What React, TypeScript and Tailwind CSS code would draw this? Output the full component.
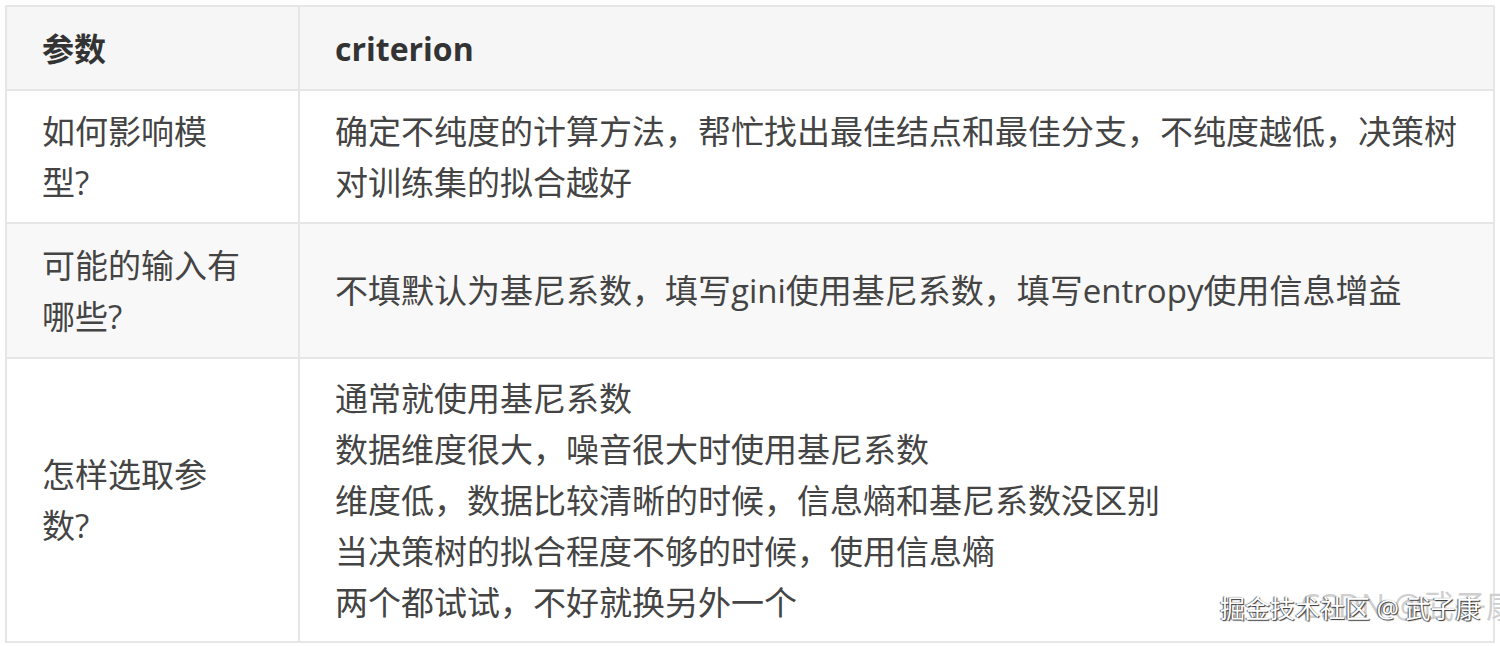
export default function App() {
  const font = "font-['Open_Sans','Noto_Sans_CJK_SC',sans-serif]";
  const tips = [
    "通常就使用基尼系数",
    "数据维度很大，噪音很大时使用基尼系数",
    "维度低，数据比较清晰的时候，信息熵和基尼系数没区别",
    "当决策树的拟合程度不够的时候，使用信息熵",
    "两个都试试，不好就换另外一个",
  ];

  return (
    <div className={`relative w-[1500px] h-[646px] bg-white overflow-hidden ${font} text-[#444]`}>
      <div className="pt-[5px] pl-[5px]">
        <table className="w-[1490px] border-collapse table-fixed text-[33px] leading-[51px]">
          <colgroup>
            <col className="w-[293px]" />
            <col />
          </colgroup>
          <thead>
            <tr className="h-[84px] bg-[#f6f6f6]">
              <th className="border-2 border-[#e6e6e6] pl-[35px] text-left font-bold text-[32px] text-[#333]">参数</th>
              <th className="border-2 border-[#e6e6e6] pl-[35px] text-left font-bold text-[32px] text-[#333]">criterion</th>
            </tr>
          </thead>
          <tbody>
            <tr className="h-[133px]">
              <td className="border-2 border-[#e6e6e6] pl-[35px] pr-[50px] align-middle">如何影响模型?</td>
              <td className="border-2 border-[#e6e6e6] pl-[35px] pr-[20px] align-middle">
                确定不纯度的计算方法，帮忙找出最佳结点和最佳分支，不纯度越低，决策树对训练集的拟合越好
              </td>
            </tr>
            <tr className="h-[135px] bg-[#f8f8f8]">
              <td className="border-2 border-[#e6e6e6] pl-[35px] pr-[50px] align-middle">可能的输入有哪些?</td>
              <td className="border-2 border-[#e6e6e6] pl-[35px] pr-[20px] align-middle">
                不填默认为基尼系数，填写gini使用基尼系数，填写entropy使用信息增益
              </td>
            </tr>
            <tr className="h-[284px]">
              <td className="border-2 border-[#e6e6e6] pl-[35px] pr-[50px] align-middle">怎样选取参数?</td>
              <td className="border-2 border-[#e6e6e6] pl-[35px] pr-[20px] align-middle">
                {tips.map((t) => (
                  <div key={t}>{t}</div>
                ))}
              </td>
            </tr>
          </tbody>
        </table>
      </div>

      <div className="absolute left-[1300px] top-[590px] text-[32px] leading-none text-[#cfcfcf] whitespace-nowrap">
        CSDN @武子康
      </div>
      <div className="absolute left-[1220px] top-[596px] text-[25px] leading-none text-white whitespace-nowrap [text-shadow:1px_1px_1px_#333,-1px_0_1px_#555]">
        掘金技术社区 @ 武子康
      </div>
    </div>
  );
}
